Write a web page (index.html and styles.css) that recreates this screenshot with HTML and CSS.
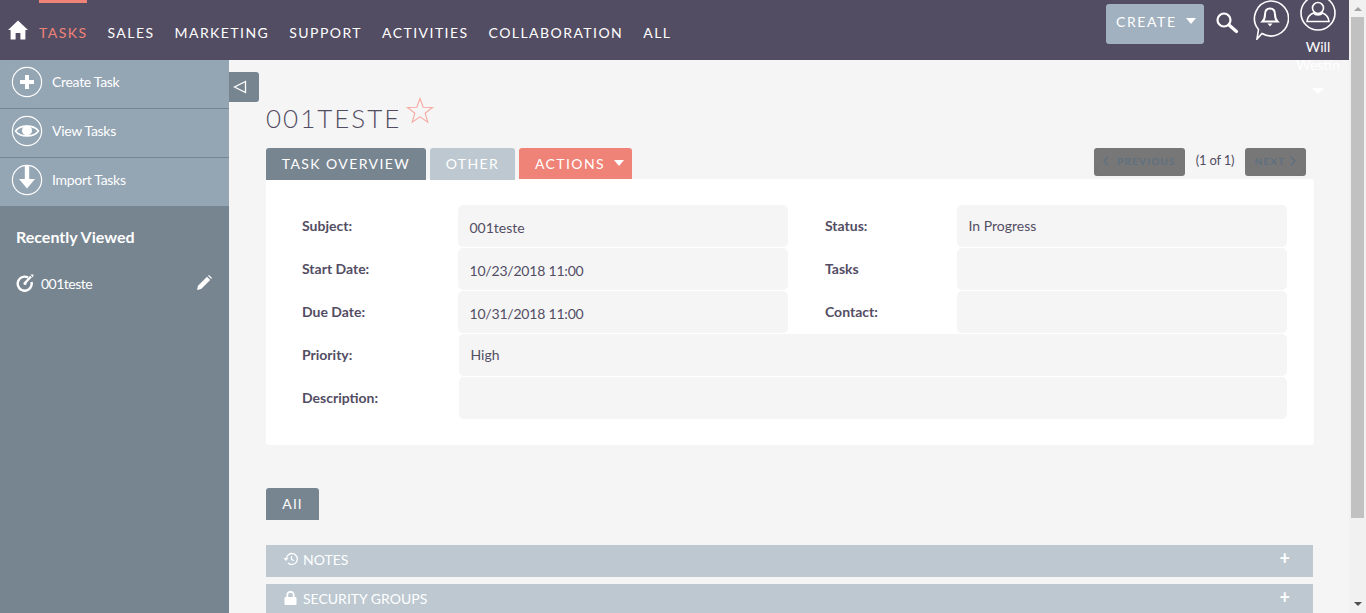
FILE: index.html
```html
<!DOCTYPE html>
<html>
<head>
    <meta charset="UTF-8">
    <title>001teste</title>
    <link rel="stylesheet" href="styles.css">
</head>
<body>
    <div class="app">
        <div class="page">
            <header class="topbar">
                <svg class="home-icon" width="22" height="20" viewBox="0 0 22 20"><path d="M11 0.5 L21 10 L18.4 10 L18.4 19.5 L13.4 19.5 L13.4 13 L8.6 13 L8.6 19.5 L3.6 19.5 L3.6 10 L1 10 Z" fill="#fff"/></svg>
                <nav class="nav">
                    <a class="nav-item active">Tasks</a>
                    <a class="nav-item">Sales</a>
                    <a class="nav-item">Marketing</a>
                    <a class="nav-item">Support</a>
                    <a class="nav-item">Activities</a>
                    <a class="nav-item">Collaboration</a>
                    <a class="nav-item">All</a>
                </nav>
                <div class="top-actions">
                    <button class="create-btn">Create <span class="caret"></span></button>
                    <svg class="search-icon" width="24" height="24" viewBox="0 0 24 24"><circle cx="9" cy="9" r="6.5" fill="none" stroke="#fff" stroke-width="2.2"/><path d="M14 14 L21.5 20.5" stroke="#fff" stroke-width="3.2" stroke-linecap="round"/></svg>
                    <svg class="bell-icon" width="38" height="40" viewBox="0 0 38 40"><path d="M19 1 A17.5 17.5 0 1 1 11 33.5 L6 39 L7.5 29.5 A17.5 17.5 0 0 1 19 1 Z" fill="none" stroke="#fff" stroke-width="1.6"/><path d="M19 8.5 C15.5 8.5 14 11 14 14.5 C14 18 13 20 11.5 21.5 L26.5 21.5 C25 20 24 18 24 14.5 C24 11 22.5 8.5 19 8.5 Z" fill="none" stroke="#fff" stroke-width="2"/><path d="M16.5 23.5 L21.5 23.5 L19 26.5 Z" fill="#fff"/></svg>
                    <div class="user-menu">
                        <svg class="avatar" width="36" height="31" viewBox="0 0 36 31"><circle cx="18" cy="13" r="17" fill="none" stroke="#fff" stroke-width="1.6"/><circle cx="18" cy="8" r="5.5" fill="none" stroke="#fff" stroke-width="1.6"/><path d="M7 21.5 C7.5 16.5 11 14 13.5 13 C15.5 15.5 20.5 15.5 22.5 13 C25 14 28.5 16.5 29 21.5 Z" fill="none" stroke="#fff" stroke-width="1.6"/></svg>
                        <span class="user-name">Will</span>
                        <span class="user-name">Westin</span>
                        <span class="caret user-caret"></span>
                    </div>
                </div>
            </header>

            <div class="layout">
                <aside class="sidebar">
                    <div class="side-actions">
                        <a class="side-action">
                            <svg width="32" height="32" viewBox="0 0 32 32"><circle cx="16" cy="16" r="14.6" fill="none" stroke="#fff" stroke-width="1.2"/><path d="M16 9 V23 M9 16 H23" stroke="#fff" stroke-width="4"/></svg>
                            Create Task
                        </a>
                        <a class="side-action">
                            <svg width="32" height="32" viewBox="0 0 32 32"><circle cx="16" cy="16" r="14.6" fill="none" stroke="#fff" stroke-width="1.2"/><path d="M4.5 16 C9 9.5 23 9.5 27.5 16 C23 22.5 9 22.5 4.5 16 Z" fill="none" stroke="#fff" stroke-width="1.6"/><circle cx="16" cy="15.5" r="5" fill="#fff"/></svg>
                            View Tasks
                        </a>
                        <a class="side-action">
                            <svg width="32" height="32" viewBox="0 0 32 32"><circle cx="16" cy="16" r="14.6" fill="none" stroke="#fff" stroke-width="1.2"/><path d="M13.8 1 H18.2 V15 H24 L16 24.5 L8 15 H13.8 Z" fill="#fff"/></svg>
                            Import Tasks
                        </a>
                    </div>
                    <h3 class="recent-title">Recently Viewed</h3>
                    <div class="recent-item">
                        <svg width="18" height="18" viewBox="0 0 18 18"><path d="M12 3.5 A7 7 0 1 0 15.5 8" fill="none" stroke="#fff" stroke-width="2.4"/><path d="M8.5 9.5 L15 2.5" stroke="#fff" stroke-width="2.4"/><path d="M14.5 0.5 L17.5 0.5 L17 3.5 Z" fill="#fff"/><circle cx="9" cy="9.5" r="1.5" fill="#fff"/></svg>
                        <span class="recent-name">001teste</span>
                        <svg width="16" height="16" viewBox="0 0 16 16"><path d="M1 15 L2 10.8 L11 1.8 L14.2 5 L5.2 14 Z" fill="#fff"/><path d="M12 0.8 L13 0 L16 3 L15.2 4 Z" fill="#fff"/></svg>
                    </div>
                </aside>

                <main class="content">
                    <button class="collapse-btn">
                        <svg width="14" height="14" viewBox="0 0 14 14"><path d="M12.5 1.5 V12.5 L1.5 7 Z" fill="none" stroke="#fff" stroke-width="1.3"/></svg>
                    </button>
                    <div class="title-row">
                        <h2 class="record-title">001teste</h2>
                        <svg class="star" width="28" height="27" viewBox="0 0 28 27"><path d="M14 1.5 L17.2 10.3 L26.5 10.5 L19.1 16.2 L21.8 25.2 L14 19.9 L6.2 25.2 L8.9 16.2 L1.5 10.5 L10.8 10.3 Z" fill="none" stroke="#f5a9a1" stroke-width="1.1"/></svg>
                    </div>

                    <div class="tab-row">
                        <a class="tab tab-overview">Task Overview</a>
                        <a class="tab tab-other">Other</a>
                        <a class="tab tab-actions">Actions <span class="caret"></span></a>
                        <div class="pager">
                            <button class="pager-btn pager-prev">
                                <svg width="6" height="10" viewBox="0 0 6 10"><path d="M5.2 0.8 L1 5 L5.2 9.2" fill="none" stroke="#5f7080" stroke-width="1.5"/></svg>
                                Previous
                            </button>
                            <span class="pager-count">(1 of 1)</span>
                            <button class="pager-btn pager-next">
                                Next
                                <svg width="6" height="10" viewBox="0 0 6 10"><path d="M0.8 0.8 L5 5 L0.8 9.2" fill="none" stroke="#5f7080" stroke-width="1.5"/></svg>
                            </button>
                        </div>
                    </div>

                    <section class="panel">
                        <div class="field-grid">
                            <div class="label">Subject:</div>
                            <div class="value low">001teste</div>
                            <div class="label label-right">Status:</div>
                            <div class="value">In Progress</div>

                            <div class="label">Start Date:</div>
                            <div class="value low date">10/23/2018 11:00</div>
                            <div class="label label-right">Tasks</div>
                            <div class="value"></div>

                            <div class="label">Due Date:</div>
                            <div class="value low date">10/31/2018 11:00</div>
                            <div class="label label-right">Contact:</div>
                            <div class="value"></div>

                            <div class="label">Priority:</div>
                            <div class="value wide">High</div>

                            <div class="label">Description:</div>
                            <div class="value wide"></div>
                        </div>
                    </section>

                    <a class="tab tab-all">All</a>

                    <div class="sub-panel">
                        <svg width="15" height="14" viewBox="0 0 15 14"><path d="M3.3 7 A5.5 5.5 0 1 1 5 11" fill="none" stroke="#fff" stroke-width="1.3"/><path d="M0.5 6 L5.5 6 L3 9 Z" fill="#fff"/><path d="M8.5 4 V7.5 L11 8.5" fill="none" stroke="#fff" stroke-width="1.2"/></svg>
                        <span class="sub-title">Notes</span>
                        <span class="plus">+</span>
                    </div>
                    <div class="sub-panel">
                        <svg width="15" height="14" viewBox="0 0 15 14"><path d="M4.3 6 V4 A3.2 3.2 0 0 1 10.7 4 V6" fill="none" stroke="#fff" stroke-width="1.7"/><rect x="1.5" y="6" width="12" height="8" rx="1" fill="#fff"/></svg>
                        <span class="sub-title">Security Groups</span>
                        <span class="plus">+</span>
                    </div>
                </main>
            </div>
        </div>

        <div class="scrollbar">
            <span class="arrow-up"></span>
            <div class="thumb"></div>
            <span class="arrow-down"></span>
        </div>
    </div>
</body>
</html>
```

FILE: styles.css
```css
html, body {
    margin: 0;
    height: 100%;
    overflow: hidden;
}

body {
    font-family: Lato, 'Open Sans', sans-serif;
    font-size: 14px;
    color: #534d64;
    background: #f5f5f5;
}

button {
    font-family: inherit;
    border: none;
    padding: 0;
}

.app {
    display: flex;
    height: 613px;
}

.page {
    flex: 1;
    min-width: 0;
    display: flex;
    flex-direction: column;
}

.caret {
    display: inline-block;
    width: 0;
    height: 0;
    border-left: 5.5px solid transparent;
    border-right: 5.5px solid transparent;
    border-top: 6px solid #fff;
    vertical-align: 3px;
}

/* top bar */
.topbar {
    height: 60px;
    flex: none;
    background: #534d64;
    display: flex;
    position: relative;
    z-index: 2;
}

.home-icon {
    margin: 20px 0 0 7px;
}

.nav {
    display: flex;
    gap: 20px;
    margin-left: 10px;
}

.nav-item {
    color: #fff;
    font-size: 14px;
    letter-spacing: 1.45px;
    text-transform: uppercase;
    border-top: 3px solid transparent;
    padding-top: 21px;
    height: 36px;
    line-height: 17px;
}

.nav-item.active {
    color: #f08377;
    border-top-color: #f08377;
}

.top-actions {
    margin-left: auto;
    display: flex;
    align-items: flex-start;
    padding-right: 13px;
}

.create-btn {
    width: 98px;
    height: 40px;
    margin-top: 4px;
    padding: 0 0 5px 10px;
    background: #a1b1bf;
    color: #fff;
    font-size: 14px;
    letter-spacing: 1.6px;
    text-align: left;
    text-transform: uppercase;
    border-radius: 3px;
}

.create-btn .caret {
    margin-left: 4px;
}

.search-icon {
    margin: 11px 0 0 11px;
}

.bell-icon {
    margin: 0 0 0 12px;
}

.user-menu {
    width: 36px;
    margin-left: 11px;
    display: flex;
    flex-direction: column;
    align-items: center;
    color: #fff;
    font-size: 14px;
    line-height: 18px;
}

.avatar {
    margin-bottom: 7px;
}

.user-caret {
    margin-top: 14px;
    border-left-width: 6.5px;
    border-right-width: 6.5px;
}

/* sidebar */
.layout {
    flex: 1;
    display: flex;
    min-height: 0;
}

.sidebar {
    width: 229px;
    flex: none;
    background: #778591;
    color: #fff;
}

.side-actions {
    background: #94a5b4;
    height: 146px;
}

.side-action {
    display: flex;
    align-items: center;
    gap: 9px;
    height: 43px;
    padding: 0 0 5px 11px;
    border-bottom: 1px solid #778591;
    font-size: 14px;
    letter-spacing: -0.3px;
}

.side-action:last-child {
    border-bottom: none;
}

.recent-title {
    margin: 21px 0 0 16px;
    font-size: 16px;
    line-height: 20px;
    font-weight: 700;
}

.recent-item {
    display: flex;
    align-items: center;
    margin-top: 27px;
    padding: 0 17px 0 16px;
}

.recent-name {
    flex: 1;
    margin-left: 7px;
    letter-spacing: -0.5px;
}

/* main */
.content {
    flex: 1;
    min-width: 0;
    overflow: hidden;
    padding: 0 35px 0 37px;
    position: relative;
}

.collapse-btn {
    position: absolute;
    left: 0;
    top: 12px;
    width: 30px;
    height: 30px;
    padding-right: 8px;
    background: #778591;
    border-radius: 0 3px 3px 0;
    display: flex;
    align-items: center;
    justify-content: center;
}

.title-row {
    display: flex;
    align-items: flex-start;
    height: 88px;
}

.record-title {
    margin: 41px 0 0;
    font-size: 26px;
    line-height: 34px;
    font-weight: 300;
    letter-spacing: 2px;
    text-transform: uppercase;
}

.star {
    margin: 37px 0 0 5px;
}

.tab-row {
    display: flex;
    align-items: flex-start;
    height: 32px;
    gap: 4px;
}

.tab {
    display: block;
    height: 32px;
    line-height: 32px;
    color: #fff;
    text-align: center;
    font-size: 14px;
    letter-spacing: 1.4px;
    text-transform: uppercase;
    border-radius: 3px 3px 0 0;
}

.tab-overview {
    width: 160px;
    background: #778591;
}

.tab-other {
    width: 85px;
    background: #bdc8d1;
}

.tab-actions {
    width: 113px;
    height: 31px;
    padding-left: 16px;
    box-sizing: border-box;
    text-align: left;
    background: #f08377;
}

.tab-actions .caret {
    margin-left: 4px;
}

.pager {
    margin-left: auto;
    margin-right: 8px;
    display: flex;
    align-items: center;
    height: 28px;
}

.pager-btn {
    height: 28px;
    display: flex;
    align-items: center;
    justify-content: center;
    gap: 8px;
    padding-bottom: 2px;
    background: #777;
    color: #5f7080;
    font-size: 10px;
    font-weight: 700;
    letter-spacing: 1.15px;
    text-transform: uppercase;
    border-radius: 3px;
}

.pager-btn svg {
    margin-top: -1px;
}

.pager-prev {
    width: 91px;
}

.pager-next {
    width: 61px;
    gap: 5px;
}

.pager-count {
    width: 60px;
    text-align: center;
    font-size: 13px;
    letter-spacing: -0.2px;
    padding-bottom: 4px;
}

.panel {
    background: #fff;
    margin-top: -1px;
    height: 266px;
    box-sizing: border-box;
    padding: 26px 27px 0 36px;
    border-radius: 0 3px 3px 3px;
}

.field-grid {
    display: grid;
    grid-template-columns: 156px 330px 169px 330px;
    grid-auto-rows: 42px;
    row-gap: 1px;
}

.label {
    font-weight: 700;
    font-size: 14px;
    line-height: 42px;
}

.label-right {
    padding-left: 37px;
}

.value {
    background: #f5f5f5;
    border-radius: 5px;
    padding-left: 11.5px;
    font-size: 14px;
    line-height: 42px;
}

.value.low {
    line-height: 46px;
}

.value.date {
    letter-spacing: -0.2px;
}

.value.wide {
    grid-column: 2 / -1;
    margin-left: 1px;
}

.tab-all {
    width: 53px;
    margin-top: 43px;
    background: #778591;
    text-transform: none;
}

.sub-panel {
    height: 32px;
    box-sizing: border-box;
    margin: 25px 1px 7px 0;
    padding: 0 0 4px 17px;
    background: #bdc8d1;
    color: #fff;
    display: flex;
    align-items: center;
}

.sub-panel + .sub-panel {
    margin-top: 7px;
}

.sub-title {
    flex: 1;
    margin-left: 5px;
    font-size: 14px;
    text-transform: uppercase;
}

.plus {
    font-size: 18px;
    font-weight: 700;
    line-height: 20px;
    margin: -3px 23px 0 0;
}

/* scrollbar drawn by hand */
.scrollbar {
    width: 17px;
    flex: none;
    background: #f1f1f1;
    display: flex;
    flex-direction: column;
    align-items: center;
}

.thumb {
    width: 13px;
    height: 501px;
    margin-top: 6px;
    background: #c1c1c1;
}

.arrow-up {
    margin-top: 7px;
    border-left: 4px solid transparent;
    border-right: 4px solid transparent;
    border-bottom: 4px solid #a3a3a3;
}

.arrow-down {
    margin-top: auto;
    margin-bottom: 7px;
    border-left: 4px solid transparent;
    border-right: 4px solid transparent;
    border-top: 4px solid #505050;
}
```
